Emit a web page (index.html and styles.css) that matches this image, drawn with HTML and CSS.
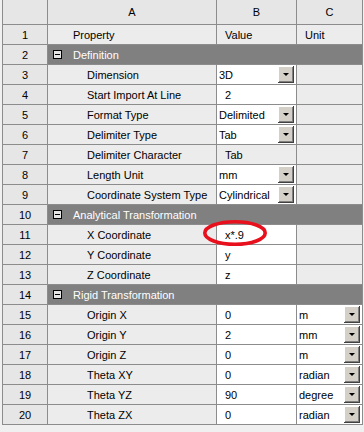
FILE: index.html
```html
<!DOCTYPE html>
<html lang="en">
<head>
<meta charset="UTF-8">
<meta name="viewport" content="width=device-width, initial-scale=1.0">
<title>Properties</title>
<link rel="stylesheet" href="styles.css">
</head>
<body>

<div class="sheet">
    <div class="cell head"></div>
    <div class="cell head center">A</div>
    <div class="cell head center">B</div>
    <div class="cell head center">C</div>

    <div class="cell num">1</div>
    <div class="cell prop top">Property</div>
    <div class="cell val">Value</div>
    <div class="cell val">Unit</div>

    <div class="cell num">2</div>
    <div class="cell group"><span class="minus"></span>Definition</div>

    <div class="cell num">3</div>
    <div class="cell prop">Dimension</div>
    <div class="cell edit drop">3D<span class="btn"></span></div>
    <div class="cell val"></div>

    <div class="cell num">4</div>
    <div class="cell prop">Start Import At Line</div>
    <div class="cell edit">2</div>
    <div class="cell val"></div>

    <div class="cell num">5</div>
    <div class="cell prop">Format Type</div>
    <div class="cell edit drop">Delimited<span class="btn"></span></div>
    <div class="cell val"></div>

    <div class="cell num">6</div>
    <div class="cell prop">Delimiter Type</div>
    <div class="cell edit drop">Tab<span class="btn"></span></div>
    <div class="cell val"></div>

    <div class="cell num">7</div>
    <div class="cell prop">Delimiter Character</div>
    <div class="cell val">Tab</div>
    <div class="cell val"></div>

    <div class="cell num">8</div>
    <div class="cell prop">Length Unit</div>
    <div class="cell edit drop">mm<span class="btn"></span></div>
    <div class="cell val"></div>

    <div class="cell num">9</div>
    <div class="cell prop">Coordinate System Type</div>
    <div class="cell edit drop">Cylindrical<span class="btn"></span></div>
    <div class="cell val"></div>

    <div class="cell num">10</div>
    <div class="cell group"><span class="minus"></span>Analytical Transformation</div>

    <div class="cell num">11</div>
    <div class="cell prop">X Coordinate</div>
    <div class="cell edit">x*.9</div>
    <div class="cell val"></div>

    <div class="cell num">12</div>
    <div class="cell prop">Y Coordinate</div>
    <div class="cell edit">y</div>
    <div class="cell val"></div>

    <div class="cell num">13</div>
    <div class="cell prop">Z Coordinate</div>
    <div class="cell edit">z</div>
    <div class="cell val"></div>

    <div class="cell num">14</div>
    <div class="cell group"><span class="minus"></span>Rigid Transformation</div>

    <div class="cell num">15</div>
    <div class="cell prop">Origin X</div>
    <div class="cell edit">0</div>
    <div class="cell edit drop">m<span class="btn"></span></div>

    <div class="cell num">16</div>
    <div class="cell prop">Origin Y</div>
    <div class="cell edit">2</div>
    <div class="cell edit drop">mm<span class="btn"></span></div>

    <div class="cell num">17</div>
    <div class="cell prop">Origin Z</div>
    <div class="cell edit">0</div>
    <div class="cell edit drop">m<span class="btn"></span></div>

    <div class="cell num">18</div>
    <div class="cell prop">Theta XY</div>
    <div class="cell edit">0</div>
    <div class="cell edit drop">radian<span class="btn"></span></div>

    <div class="cell num">19</div>
    <div class="cell prop">Theta YZ</div>
    <div class="cell edit">90</div>
    <div class="cell edit drop">degree<span class="btn"></span></div>

    <div class="cell num">20</div>
    <div class="cell prop">Theta ZX</div>
    <div class="cell edit">0</div>
    <div class="cell edit drop">radian<span class="btn"></span></div>
</div>

<svg class="mark" width="70" height="30" viewBox="0 0 70 30">
    <ellipse cx="35" cy="14" rx="30.2" ry="11.3" fill="none" stroke="#e8101c" stroke-width="3.6"/>
</svg>

</body>
</html>
```

FILE: styles.css
```css
body {
    margin: 0;
    background-color: #f0f0f0;
    font-family: "Liberation Sans", Arial, sans-serif;
    font-size: 11px;
    color: #000;
}

.sheet {
    display: grid;
    grid-template-columns: 44px 168px 79px 65px;
    grid-template-rows: 24px repeat(20, 19px);
    gap: 1px;
    padding: 0 1px 1px 1px;
    margin-left: 2px;
    width: 361px;
    box-sizing: border-box;
    background-color: #8c8c8c;
}

.cell {
    display: flex;
    align-items: center;
    white-space: nowrap;
    overflow: hidden;
    background-color: #ececec;
}

.head {
    background-color: #e6e6e6;
}

.center {
    justify-content: center;
}

.num {
    justify-content: center;
    background-color: #e6e6e6;
}

.prop {
    padding-left: 39px;
}

.prop.top {
    padding-left: 25px;
}

.val {
    padding-left: 8px;
}

.edit {
    padding-left: 8px;
    background-color: #fff;
}

.edit.drop {
    padding-left: 2px;
    padding-right: 2px;
    justify-content: space-between;
}

.group {
    grid-column: 2 / 5;
    background-color: #808080;
    color: #fff;
    padding-left: 5px;
}

.minus {
    width: 7px;
    height: 7px;
    border: 1px solid #000;
    background-color: #e4e4e4;
    margin-right: 11px;
    position: relative;
}

.minus::after {
    content: "";
    position: absolute;
    left: 1px;
    top: 3px;
    width: 5px;
    height: 1px;
    background-color: #000;
}

.btn {
    width: 16px;
    height: 17px;
    flex-shrink: 0;
    background-color: #d4d0c8;
    box-shadow: inset -1px -1px #404040, inset 1px 1px #fff, inset -2px -2px #808080;
    position: relative;
}

.btn::after {
    content: "";
    position: absolute;
    left: 5px;
    top: 7px;
    border-left: 3px solid transparent;
    border-right: 3px solid transparent;
    border-top: 3px solid #000;
}

.mark {
    position: absolute;
    left: 200px;
    top: 219px;
}
```
